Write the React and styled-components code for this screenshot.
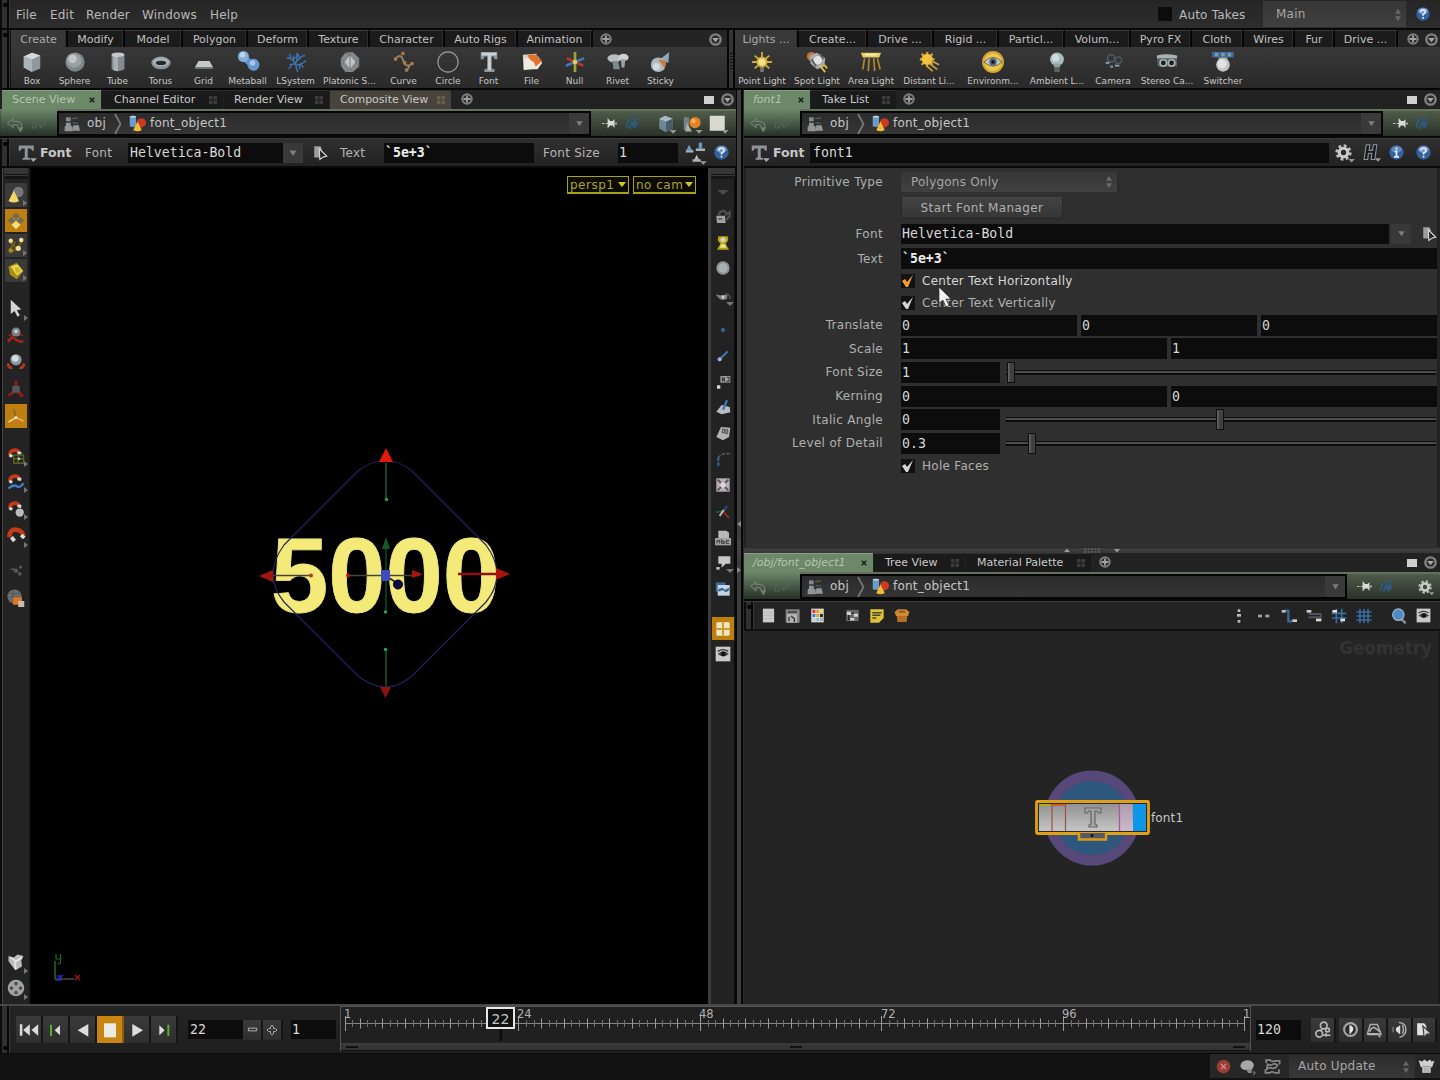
import React from "react";
import styled, { createGlobalStyle, css } from "styled-components";

const Global = createGlobalStyle`
  * { box-sizing: border-box; }
  html, body { margin: 0; padding: 0; background: #111; overflow: hidden; }
  body { font-family: "DejaVu Sans", sans-serif; font-size: 12px; color: #c4c4c4; }
`;
const mono = `"DejaVu Sans Mono", "Liberation Mono", monospace`;

/* ---------- icons ---------- */
const W = "#dcdcdc", Y = "#e2c33a";
const magnet = (
  <g>
    <path d="M4 12a6.500 6.500 0 0 1 12-3.500" fill="none" stroke="#c23a17" strokeWidth="5" />
    <path d="M3 12l4 2M14 9l5 1" stroke={W} strokeWidth="4" />
  </g>
);
const shapes = {
  box: <g><path d="M3 6l9-4 9 3v14l-9 4-9-5z" fill="#8f989c" /><path d="M3 6l9-4 9 3-9 4z" fill="#d3dadc" /><path d="M3 6l9 3v14l-9-5z" fill="#abb4b8" /></g>,
  sphere: <g><circle cx="12" cy="12" r="10.500" fill="#7d8588" /><circle cx="11" cy="10.500" r="8" fill="#99a1a4" /><circle cx="9.500" cy="8.500" r="4.500" fill="#c2c9cb" /></g>,
  tube: <g><path d="M5 4v16q7 4 14 0V4z" fill="#828b90" /><path d="M7 5v16q3 1 5 1V5z" fill="#a9b1b5" /><ellipse cx="12" cy="4" rx="7" ry="2.500" fill="#c3cacd" /></g>,
  torus: <g><ellipse cx="12" cy="13" rx="10.500" ry="7" fill="#8b9397" /><ellipse cx="12" cy="12" rx="9" ry="5" fill="#a9b0b3" /><ellipse cx="12" cy="13" rx="5.500" ry="2.300" fill="#24272a" /></g>,
  grid: <g><path d="M6 11h12l4 7H2z" fill="#c3c8c9" /><path d="M2 18h20v1.500H2z" fill="#777" /></g>,
  metaball: <g><path d="M7 7l10 8" stroke="#5b8fc6" strokeWidth="7" /><circle cx="7" cy="6" r="6" fill="#83acd8" /><circle cx="18" cy="15" r="6.500" fill="#6797cd" /><circle cx="6" cy="4" r="3" fill="#bdd3ea" /><circle cx="17" cy="13" r="3" fill="#a8c6e6" /></g>,
  lsystem: <g fill="none" stroke="#3b74b2" strokeWidth="1.600"><path d="M14 23q-3-7-2-12M12 14L6 8M12 14L5 15M12 12l6-6M12 16l8-3M6 8L2 8M6 8L5 3M9 11l0-6M16 8l-2-5M18 6l4-1M17 14l3 4M8 14.500l-4 5M20 13l3-3M13 11l0-9M16 14l0 6M9 9l4-3" /></g>,
  platonic: <g><path d="M7 2l8-1 7 7v9l-7 6H7l-5-7V8z" fill="#86898b" /><path d="M12 5l6 7-6 7-6-7z" fill="#c2c4c5" /><path d="M2 8l4 4-4 4M7 2l5 3 3-4M22 8l-4 4 4 5M7 23l5-4 3 4M12 5v14" stroke="#6c6f71" fill="none" /></g>,
  curve: <g><path d="M3 8q6-6 8 2 2 9 10 4M19 14l-4 8" fill="none" stroke="#8e8470" strokeWidth="2" /><g fill="#b8783e"><rect x="1" y="7" width="3.500" height="3.500" /><rect x="9" y="1" width="3.500" height="3.500" /><rect x="11" y="11" width="3.500" height="3.500" /><rect x="19" y="12" width="3.500" height="3.500" /><rect x="13" y="19" width="3.500" height="3.500" /></g></g>,
  circle: <circle cx="12" cy="12" r="11" fill="none" stroke="#9a9ea1" strokeWidth="1.200" />,
  bigT: <g><path d="M3 1h18v8h-3l-1-3h-2v13l3 1v3H7v-3l3-1V6H7L6 9H3z" fill="#8f979b" /><path d="M4 2h16v3H4zM11 5h3v16h-3z" fill="#ccd2d4" /></g>,
  file: <g><path d="M2 4l15-1v16L3 21z" fill="#d8cfc0" /><path d="M3 8h5l2-2h9l4 7-5 7H3z" fill="#f0ece2" /><path d="M7 5q9-3 11 1l5 5-7 6-2-5q-4-1-7-7z" fill="#e0702a" /></g>,
  nullI: <g strokeWidth="3"><path d="M2 16l20-8" stroke="#3d78b4" /><path d="M3 8l18 8" stroke="#b13a2c" /><path d="M12 1v22" stroke="#9aa23a" /><circle cx="12" cy="12" r="2.500" fill="#ddd069" stroke="none" /></g>,
  rivet: <g><ellipse cx="8" cy="8" rx="7.500" ry="4.500" fill="#b7bec1" /><path d="M6 11h6l2 9H7z" fill="#7f8a8f" /><ellipse cx="18" cy="7" rx="5.500" ry="4" fill="#cdd3d5" /><path d="M15 9h5l-1 9h-3z" fill="#98a3a8" /></g>,
  sticky: <g><path d="M21 1l-1 12-9-4z" fill="#8fa7bb" /><circle cx="9" cy="15" r="8" fill="#aeb9c0" /><path d="M9 9l9 2-2 8z" fill="#d5793a" /><circle cx="7" cy="17" r="4" fill="#d1d7da" /></g>,
  pointLight: <g stroke="#d1a936" strokeWidth="2"><path d="M12 1v20M1 12h22M4 5l16 14M20 5L4 19" /><circle cx="12" cy="12" r="5" fill="#f3e28c" /><rect x="10" y="18" width="4" height="5" fill="#777" stroke="none" /></g>,
  spotLight: <g><ellipse cx="6" cy="6" rx="5" ry="5" fill="#c4743a" /><path d="M4 5l8-3 9 6-1 9-8 3-7-6z" fill="#a9abac" /><circle cx="13" cy="10" r="4.500" fill="#e4e4e2" /><path d="M6 9l5 8M15 3l4 6" stroke="#5d6265" strokeWidth="2" /><path d="M15 16l6 7M20 15l3 4" stroke={Y} strokeWidth="2" /></g>,
  areaLight: <g><path d="M1 2h22l-2 5H3z" fill="#e7cc5f" /><path d="M5 3h14l-1 2H6z" fill="#fbf0b8" /><path d="M5 8l-2 12M10 8l-1 14M15 8l1 14M19 8l3 12" stroke="#b58a2e" strokeWidth="1.800" /></g>,
  distant: <g><path d="M10 1v16M2 9h16M4 3l12 12M16 3L4 15" stroke="#d9a02c" strokeWidth="2.500" /><circle cx="10" cy="9" r="6" fill="#efc246" /><path d="M15 11l8 4M13 14l8 6M9 16l7 6" stroke="#d0a73a" strokeWidth="1.800" /></g>,
  environ: <g><circle cx="12" cy="12" r="12" fill="#d3a82d" /><circle cx="12" cy="12" r="9.500" fill="#e9c853" /><path d="M2 12q10-10 20 0-10 9-20 0z" fill="#c2c6c4" stroke="#6f6233" /><circle cx="12" cy="12" r="4" fill="#4d6680" /><circle cx="12" cy="12" r="1.800" fill="#111" /></g>,
  ambient: <g><circle cx="12" cy="9" r="7.500" fill="#a9bcc0" /><circle cx="10.500" cy="7.500" r="4" fill="#cfdcde" /><path d="M8 14h8l-1 4H9z" fill="#8fa3a7" /><rect x="9" y="18" width="6" height="5" fill="#5f6466" /></g>,
  camera: <g><path d="M1 12l6-5h10l5 5-5 6H6z" fill="#30373a" /><circle cx="10" cy="8" r="4" fill="none" stroke="#566066" strokeWidth="1.500" /><circle cx="18" cy="10" r="3.500" fill="none" stroke="#4d585e" strokeWidth="1.500" /><path d="M9 17h3M14 16h5M4 13h4" stroke="#98a5aa" strokeWidth="2" /></g>,
  stereo: <g><path d="M1 6q10-4 22 0v11H2z" fill="#596367" /><path d="M1 5q10-3 22 0v3H1z" fill="#aab2b5" /><circle cx="8" cy="13" r="3.500" fill="#1c1f20" stroke="#aab2b5" strokeWidth="1.800" /><circle cx="17" cy="13" r="3.500" fill="#1c1f20" stroke="#aab2b5" strokeWidth="1.800" /></g>,
  switcher: <g><path d="M0 1h24v6H0z" fill="#3f668f" /><path d="M3 2h4v4H3zM10 2h4v4h-4zM17 2h4v4h-4z" fill="#7799ba" /><path d="M7 7h10v5H7z" fill="#999" /><circle cx="12" cy="15" r="7.500" fill="#c3c5c5" /><circle cx="11" cy="14" r="5" fill="#e2e2e0" /></g>,
  plus: <g><circle cx="12" cy="12" r="9.500" fill="#2c2c2c" stroke="#7d7d7d" strokeWidth="4" /><path d="M12 5v14M5 12h14" stroke="#a0a0a0" strokeWidth="3.600" /></g>,
  down: <g><circle cx="12" cy="12" r="9.500" fill="#2a2a2a" stroke="#808080" strokeWidth="4.500" /><path d="M6 9h12l-6 8z" fill="#a8a8a8" /></g>,
  back: <g fill="none" stroke="#75806f" strokeWidth="1.700"><path d="M1 11l8-7v4h5q8 1 8 7v3h-5q0-5-4-5H9v4z" /><path d="M17 18l3 5 3-5z" fill="#75806f" /></g>,
  fwd: <g fill="none" stroke="#566154" strokeWidth="1.700"><path d="M22 11l-8-7v4H9q-8 1-7 7v3h5q0-5 4-5h3v4z" /></g>,
  obj: <g><path d="M3 2h7v6H3z" fill="#85898b" /><path d="M3 10h7v4l3 2v7H1v-7l2-2zM14 14h8l2 8H13z" fill="#929597" /><path d="M12 4l9-1M13 10l8 1" stroke="#565859" strokeWidth="2" /></g>,
  geo: <g><path d="M1 2q5-2 9 0v14q-4 2-9 0z" fill="#6b9cc9" /><ellipse cx="5.500" cy="2.500" rx="4.500" ry="1.500" fill="#b4cfe6" /><circle cx="17.500" cy="11" r="6.500" fill="#cb3a20" /><path d="M12 9l6 12q-6 4-12 0z" fill="#f2bd36" /></g>,
  pin: <g><path d="M0 12h4M6 12h5" stroke="#bbb" strokeWidth="1.800" /><path d="M9 3l4 5h4l3-3v14l-3-4h-4l-4 5z" fill="#d8dad5" /><path d="M20 12h4" stroke="#aaa" strokeWidth="3" /></g>,
  link: <g fill="none" stroke="#2f587f" strokeWidth="2.800"><path d="M3 19Q1 4 21 3M8 21q-1-12 11-12M14 20l7-9" /><circle cx="14.500" cy="13" r="3" fill="#2f587f" /></g>,
  cube: <g><path d="M3 5l8-4 10 4v13l-9 5-9-5z" fill="#6f8795" /><path d="M3 5l8-4 10 4-9 4z" fill="#a9bac4" /><path d="M12 9l9-4v13l-9 5z" fill="#485c69" /><path d="M17 20h9l-4.500 5z" fill="#999" /></g>,
  geoOrange: <g><path d="M1 3h7v17H1z" fill="#6f8089" /><path d="M5 10l7 12H3z" fill="#a9b1ae" /><circle cx="16" cy="10" r="7.500" fill="#e38123" /><circle cx="14" cy="8" r="3" fill="#f5b060" /><path d="M17 20h9l-4.500 5z" fill="#999" /></g>,
  white: <g><rect x="1" y="1" width="20" height="20" fill="#d8dacf" /><path d="M17 20h9l-4.500 5z" fill="#999" /></g>,
  tHead: <g><path d="M1 2h20v7h-2l-2-3h-4v12l3 1v2H6v-2l3-1V6H5L3 9H1z" fill="#8f9496" /><path d="M16 19h9l-4.500 5z" fill="#aaa" /></g>,
  dropS: <path d="M5 7h14l-7 11z" fill="#7d7d7d" />,
  picker: <g><path d="M2 2h10l2 4v14H2z" fill="#9d9d9d" /><path d="M10 6l12 12-5 1-6 4z" fill="#222" stroke="#d5d5d5" strokeWidth="1.800" /></g>,
  handles: <g><path d="M1 10h9M13 8h11M9 21h10" stroke="#a8b1b5" strokeWidth="3" /><path d="M5 3l3 6H2zM17 0h3v7h-3z" fill="#6d9ac4" stroke="#6d9ac4" /><path d="M14 14l3 6h-6z" fill="#bbb" /><path d="M18 22h8l-4 4z" fill="#999" /></g>,
  help: <g><circle cx="12" cy="12" r="11.500" fill="#34609d" /><ellipse cx="12" cy="7" rx="8.500" ry="5.500" fill="#7599c6" /><path d="M8 9q0-4 4-4t4 4q0 2-4 4v2M12 17v3" fill="none" stroke="#e4ebf3" strokeWidth="2.800" /></g>,
  info: <g><circle cx="12" cy="12" r="11.500" fill="#34609d" /><ellipse cx="12" cy="7" rx="8.500" ry="5.500" fill="#5f88bb" /><path d="M12 4v3M9 10h3v8M8 19h8" fill="none" stroke="#e4ebf3" strokeWidth="2.800" /></g>,
  gear: <g><circle cx="12" cy="12" r="9.500" fill="none" stroke="#b9bcb8" strokeWidth="4" strokeDasharray="4 3.460" /><circle cx="12" cy="12" r="6" fill="none" stroke="#c9ccc8" strokeWidth="4.500" /><path d="M19 21h9l-4.500 5z" fill="#999" /></g>,
  hou: <g><path d="M6 1h5l-1 8h5l1-8h5l-3 21h-5l1-9H9l-1 9H3z" fill="#17171b" stroke="#8f979c" strokeWidth="1.500" /><path d="M18 20h9l-4.500 5z" fill="#999" /></g>,
  selObj: <g><circle cx="15" cy="8" r="7" fill="#74787b" /><path d="M9 6l7 14q-7 4-14 0z" fill="#f0d768" /></g>,
  selDiamond: <g><path d="M12 1l11 10-11 10L1 11z" fill="#6f6a5c" /><path d="M6 6l11 10M18 6L7 16" stroke="#b5832c" strokeWidth="1.500" /><path d="M12 12l6 5-6 6-6-6z" fill="#f0e180" /></g>,
  selPts: <g><path d="M3 6l11 10L4 20M20 5l-6 11M3 18l8-12" stroke="#6f5a12" strokeWidth="3" fill="none" /><g fill="#eddf96"><circle cx="5" cy="5" r="3" /><circle cx="19" cy="4" r="3" /><circle cx="15" cy="15" r="3.500" /></g><circle cx="5" cy="18" r="3" fill="#a98d1c" /></g>,
  selPrim: <g><path d="M2 6l11-5 9 11-9 11-9-6z" fill="#a89016" /><path d="M5 6l9-3 7 9-8 6z" fill="#e8d556" /><path d="M10 8l5-1 3 5-5 3z" fill="#cbb32b" /></g>,
  arrow: <path d="M5 1l14 13-6 .500 4 7-3 2-4-7.500L5 20z" fill="#d4d4d4" />,
  move: <g><path d="M1 21l6-6 8 5 7 1" fill="none" stroke="#a02716" strokeWidth="3.500" /><path d="M2 12h19" stroke="#822" strokeWidth="2.500" /><circle cx="12" cy="8" r="6" fill="#7b8286" /><circle cx="12" cy="7" r="2.500" fill="#caced0" /></g>,
  rotate: <g><path d="M1 14q2 7 6 5M23 14q-2 7-6 5" fill="none" stroke="#ab3b18" strokeWidth="4" /><circle cx="12" cy="9" r="7.500" fill="#8f999e" /><circle cx="11" cy="7" r="4.500" fill="#d4dadd" /></g>,
  scale: <g><path d="M12 1v8M10 15L2 21M14 15l7 7" stroke="#8d1c14" strokeWidth="4.500" /><path d="M7 8h10v9H7z" fill="#54575b" /></g>,
  axes: <g fill="none" strokeWidth="2"><path d="M9 3l3 11" stroke="#806a2e" /><path d="M12 14l-10 6" stroke="#e0d59a" /><path d="M12 14l10 5" stroke="#d9b86a" /><path d="M9 19h8" stroke="#e8603a" /><circle cx="12" cy="14" r="2" fill="#eee3b0" stroke="none" /></g>,
  magGrid: <g>{magnet}<path d="M9 12h13v11H9zM9 17h13M15 12v11" fill="none" stroke="#56621f" strokeWidth="2" /><circle cx="16" cy="17" r="1.800" fill="#ccc" /></g>,
  magCurve: <g>{magnet}<path d="M2 22q7-6 11-3t9-4" fill="none" stroke="#3f7fc4" strokeWidth="3" /></g>,
  magPt: <g>{magnet}<circle cx="17" cy="18" r="5.500" fill="#b9bcbc" /></g>,
  mag: <g><path d="M3 15Q4 3 13 5q7 1 9 8" fill="none" stroke="#c23a17" strokeWidth="6" /><path d="M6 15l4 5M19 12l4 4" stroke={W} strokeWidth="5" /></g>,
  dim: <g fill="#55585a"><path d="M3 11l7-2v4z" /><circle cx="12" cy="13" r="3" /><circle cx="18" cy="8" r="2" /><circle cx="17" cy="17" r="2.500" /></g>,
  world: <g><circle cx="10" cy="10" r="9.500" fill="#6b6e6f" /><path d="M3 6h14M2 11h15M8 2v16" stroke="#55585a" strokeWidth="1.600" /><rect x="8" y="11" width="12" height="10" fill="#d87a22" /><rect x="15" y="16" width="8" height="8" fill="#c9bcb0" /></g>,
  cloth: <g><path d="M2 4l7 2 5-4 8 2-3 6 1 8-9 5-6-8-3-4z" fill="#b9bdbd" /><path d="M5 6l7 5 8-5M10 12l2 10" stroke="#e9ebeb" strokeWidth="2" fill="none" /></g>,
  reel: <g><circle cx="12" cy="12" r="11" fill="#a0a3a3" /><g fill="#505252"><circle cx="12" cy="6" r="2.500" /><circle cx="12" cy="18" r="2.500" /><circle cx="6" cy="12" r="2.500" /><circle cx="18" cy="12" r="2.500" /></g></g>,
  tri: <path d="M3 9h18l-9 7z" fill="#4a4a4a" />,
  lock: <g><path d="M2 10h13l1 11H3z" fill="#a2a2a2" /><path d="M6 10q0-6 5-7t6 5l5-3v6l-5 5" fill="none" stroke="#4e4e4e" strokeWidth="3.500" /><path d="M5 15h6" stroke="#444" strokeWidth="2" /></g>,
  lampY: <g><path d="M5 2h14l1 6-4 5 5 9H3l5-9-4-5z" fill="#b4a317" /><circle cx="12" cy="7" r="4" fill="#d8d2ae" /><path d="M9 14h6l2 5H7z" fill="#ece287" /></g>,
  ball: <g><circle cx="12" cy="12" r="10" fill="#8d9496" /><circle cx="12" cy="12" r="7" fill="#a9b0b2" /></g>,
  ghost: <g><path d="M1 8q9 3 18-1l-1 8q-8 4-13-2z" fill="#7e7e7e" /><circle cx="12" cy="12" r="2.500" fill="#ccc" /><path d="M15 8q6-2 8 7" fill="none" stroke="#555" strokeWidth="2" /></g>,
  dot: <circle cx="12" cy="12" r="3.200" fill="#2b649f" />,
  norm: <g><path d="M6 18L19 5" stroke="#3d7bb5" strokeWidth="3" /><circle cx="7" cy="17" r="3.200" fill="#9ab5c9" /></g>,
  ptNum: <g><path d="M8 3h15v10H8z" fill="#9b9b9b" /><path d="M11 11V5l3 6V5M18 5h3v6h-4" stroke="#333" strokeWidth="1.500" fill="none" /><rect x="3" y="17" width="5" height="5" fill="#ddd" /></g>,
  primN: <g><path d="M2 19l8-10 12 3 1 8-13 3z" fill="#b9bcbd" /><path d="M12 16l6-14" stroke="#3a78b8" strokeWidth="3.500" /></g>,
  primNum: <g><path d="M2 18l7-15 14 1-2 14-9 5z" fill="#b3b3b3" /><path d="M11 6h3v6h-3zM16 7h3v6h-3z" fill="none" stroke="#4c4c4c" strokeWidth="1.500" /></g>,
  hull: <g fill="none" strokeWidth="2"><path d="M5 10Q9 3 22 4" stroke="#5e6468" strokeDasharray="5 2" /><path d="M5 9v14" stroke="#2c5d8d" strokeWidth="3.500" strokeDasharray="6 1.500" /></g>,
  tex: <g><rect x="2" y="2" width="20" height="20" fill="#b6afb3" /><path d="M4 4l5 5M20 4l-5 5M4 20l5-5M20 20l-5-5" stroke="#674c5d" strokeWidth="3" /><circle cx="12" cy="12" r="4" fill="#d7d7d5" /></g>,
  rgb: <g strokeWidth="3"><path d="M12 12l6-9" stroke="#234f80" /><path d="M14 11L2 12" stroke="#1f5c28" /><path d="M13 12l8 9" stroke="#8f2720" /><path d="M7 18l6-9" stroke="#bbb" /></g>,
  abc: <g><path d="M5 1h12l4 3v9H5z" fill="#b8b8b8" /><path d="M0 12h24v11H0z" fill="#9e9e9e" /><path d="M3 20v-4h4v4M10 14v6h4v-3h-3M21 16h-4v4h4" stroke="#333" fill="none" strokeWidth="1.500" /></g>,
  speech: <g><path d="M5 2h18v11h-7l-6 6v-6H5z" fill="#c8c8c8" /><rect x="2" y="18" width="5" height="4" fill="#bbb" /></g>,
  image: <g><path d="M1 2h15v14H1z" fill="#3b6796" /><path d="M4 6h18v16H4z" fill="#c4d4e3" /><path d="M5 12l6-2 4 3 6-3v4l-4 3-6-3-6 2z" fill="#3e6690" /></g>,
  fourG: <g><rect x="2" y="2" width="20" height="20" rx="2" fill="#efe6c2" /><path d="M12 2v20M2 12h20" stroke="#cf9a35" strokeWidth="3" /></g>,
  eyeBox: <g><rect x="1" y="1" width="22" height="22" fill="#c9c9c9" /><path d="M4 12q8-8 17 0-9 7-17 0z" fill="#4a4a4a" /><path d="M4 8q8-5 16 0" fill="none" stroke="#333" strokeWidth="2" /><circle cx="12.500" cy="12" r="3.600" fill="#111" /></g>,
  list: <g><rect x="3" y="1" width="18" height="22" fill="#cacaca" /><path d="M3 7h18M3 12h18M3 17h18" stroke="#b0b0b0" /></g>,
  listPage: <g><rect x="1" y="2" width="21" height="20" fill="#858585" /><path d="M4 6h14" stroke="#333" strokeWidth="2" /><rect x="3" y="9" width="15" height="13" fill="#b2b2b2" /><path d="M6 20v-7M9 12l5 4v5" stroke="#333" strokeWidth="2" fill="none" /></g>,
  swatch: <g><rect x="2" y="1" width="20" height="22" fill="#dadada" />{["#d03a2a", "#e3a02a", "#e8df3a", "#3d7fc0", "#e3a02a", "#222", "#ccc", "#7cc", "#aaa"].map((c, i) => <rect key={i} x={4 + (i % 3) * 6} y={3 + Math.floor(i / 3) * 6.500} width="4.500" height="5" fill={c} />)}</g>,
  netNode: <g><path d="M2 3h20v18H2z" fill="#666" /><path d="M3 6h7v5H3zM14 9h7v5h-7zM8 16h7v4H8z" fill="#d0d0d0" /><path d="M10 8h4M6 11v7h2" stroke="#1a1a1a" strokeWidth="2" fill="none" /></g>,
  note: <g><path d="M2 2h20v13l-7 7H2z" fill="#dcc338" /><path d="M5 7h14M5 11h12M5 15h6" stroke="#4c4618" strokeWidth="2.200" /></g>,
  crate: <g><path d="M4 9h16l-1 12H5z" fill="#b56f22" /><path d="M1 6l5-4h12l5 4-2 6H3z" fill="#cf8c32" /><path d="M7 4h10v3H7z" fill="#8f5a1c" /></g>,
  alV: <g fill="#bbb"><rect x="10" y="2" width="4" height="4" /><rect x="9" y="9" width="6" height="4" /><rect x="10" y="18" width="4" height="4" /></g>,
  alH: <g fill="#a2a2a2"><rect x="3" y="10" width="6" height="4" /><rect x="14" y="10" width="6" height="4" /></g>,
  wireV: <g><path d="M5 4h6v16h6" fill="none" stroke="#35699b" strokeWidth="3.500" /><rect x="1" y="3" width="6" height="4" fill="#bbb" /><rect x="17" y="17" width="7" height="4" fill="#ccc" /></g>,
  wireH: <g><path d="M4 9h18v5H4" fill="none" stroke="#4b565f" strokeWidth="3" /><rect x="1" y="3" width="7" height="4" fill="#ccc" /><rect x="15" y="16" width="8" height="4" fill="#ddd" /></g>,
  gridN: <g><path d="M1 8h22M1 15h22M8 1v22M16 1v22" stroke="#3a6fa2" strokeWidth="2.500" /><rect x="2" y="3" width="7" height="4" fill="#ddd" /><rect x="14" y="16" width="7" height="4" fill="#ddd" /></g>,
  gridB: <path d="M1 6h22M1 12h22M1 18h22M6 1v22M12 1v22M18 1v22" stroke="#3a6fa2" strokeWidth="2.300" />,
  mag2: <g><path d="M15 16l7 7" stroke="#888" strokeWidth="4" /><circle cx="11" cy="10" r="8.500" fill="#4f8bc2" stroke="#93b2cf" strokeWidth="2" /></g>,
  first: <path d="M1 5h3v14H1zM13 5v14L5 12zM23 5v14l-8-7z" fill={W} />,
  prevK: <g><path d="M3 4h3v17H3z" fill="#55b02c" /><path d="M18 5v15l-8-7.500z" fill={W} /></g>,
  rev: <path d="M20 3v19L4 12.500z" fill={W} />,
  stop: <path d="M3 2h18v21H3z" fill="#ecebe6" />,
  play: <path d="M5 3v19l16-9.500z" fill={W} />,
  nextK: <g><path d="M17 4h3v17h-3z" fill="#55b02c" /><path d="M5 5v15l8-7.500z" fill={W} /></g>,
  minus: <path d="M3 9h18v6H3z" fill="none" stroke="#bbb" strokeWidth="2" />,
  plusO: <path d="M12 2l3 4v3h4l3 3-3 3h-4v4l-3 3-3-3v-4H5l-3-3 3-3h4V6z" fill="none" stroke="#aaa" strokeWidth="2" />,
  keyI: <g fill="none" stroke="#b8b8b8" strokeWidth="2.200"><circle cx="13" cy="6" r="4.500" /><path d="M11 10l-2 3" /><circle cx="7" cy="17" r="4.500" /><circle cx="18" cy="12" r="2.500" /><path d="M11 19h11M16 16v5" /></g>,
  clock: <g><circle cx="12" cy="12" r="9" fill="#2c2c2c" stroke="#a5a5a5" strokeWidth="3" /><path d="M11.500 6v12M13 8q4 3 0 7z" stroke="#e6e6e6" strokeWidth="2" fill="#ddd" /></g>,
  chart: <g><path d="M2 18l4-13h10l5 13z" fill="none" stroke="#aaa" strokeWidth="2" /><path d="M5 15q4-8 8-5t7 5M2 19h15" stroke="#bbb" strokeWidth="2" fill="none" /><path d="M15 18h8l-4 6z" fill="#999" /></g>,
  audio: <g fill="none" strokeWidth="2"><path d="M3 8v8" stroke="#777" /><path d="M7 10l6-4v13l-6-5z" fill="#ddd" stroke="none" /><path d="M11 2q10 1 10 10t-9 11M16 6q3 6 0 12" stroke="#b0b0b0" /></g>,
  book: <g><path d="M3 3h10l3 4v13H3z" fill="#e2e2e2" /><path d="M11 7l12 11-6 .500-4 5z" fill="#ccc" stroke="#333" strokeWidth="1.500" /></g>,
  err: <g><circle cx="12" cy="12" r="11" fill="#983d33" /><path d="M8 8l8 8M16 8l-8 8" stroke="#cf9088" strokeWidth="2" /></g>,
  brain: <g><path d="M2 12q0-8 9-9 10 0 10 8l-3 6q-13 2-16-5z" fill="#a8a8a8" /><path d="M10 16h8v5h-5z" fill="#8a8a8a" /><path d="M20 17l4 4-4 4z" fill="#666" /></g>,
  cook: <g fill="none" stroke="#858585" strokeWidth="2.500"><path d="M3 7V3h6q2 3 6 1h7v5M21 16v5h-6q-4-3-7 0H2v-5M5 9q4 2 7 0t7 1l-3 4q-4 1-6 0t-6 2z" /></g>,
  hat: <g><path d="M1 3l5 2 3-3 4 3 4-3 2 3 4-1-3 9H4z" fill="#d0d0d0" /><path d="M6 12h12v9H6z" fill="#c3c3c3" /><path d="M6 12h12M10 14v6M14 14v6" stroke="#888" /></g>,
};
const Svg = styled.svg`display: block; flex: none; overflow: visible;`;
const Icon = ({ n, s = 18 }) => <Svg width={s} height={s} viewBox="0 0 24 24">{shapes[n]}</Svg>;

/* ---------- frame ---------- */
const Screen = styled.div`width: 1440px; height: 1080px; display: flex; flex-direction: column; background: #111; overflow: hidden; white-space: nowrap; line-height: 1;`;
const MenuBar = styled.header`height: 30px; flex: none; display: flex; align-items: center; padding: 0 10px 0 0; background: linear-gradient(#252525, #2d2d2d); border-bottom: 2px solid #070707;`;
const Handle = styled.div`width: 10px; align-self: stretch; flex: none; margin-right: ${p => p.$gap ?? 1}px; background: linear-gradient(90deg, #0b0b0b 0 2px, #303030 2px 7px, #070707 7px 9px, #353535 9px); display: flex; justify-content: center; align-items: ${p => p.$low ? "flex-end" : "flex-start"}; padding: 3px 0;
  &::before { content: ""; width: 5px; height: 4px; background: #050505; border-radius: 2px; }`;
const Menu = styled.span`width: ${p => p.$w}px; letter-spacing: .2px; padding-top: 2px; color: #b8b8b8;`;
const Spacer = styled.div`flex: 1;`;
const TakeCheck = styled.i`width: 14px; height: 14px; background: #0c0c0c; margin-right: 7px;`;
const Combo = styled.div`display: flex; align-items: center; justify-content: space-between; width: ${p => p.$w}px; height: ${p => p.$h}px; padding: 0 5px 0 ${p => p.$pl}px; margin-right: ${p => p.$mr || 0}px; background: linear-gradient(${p => p.$dark ? "#2d2d2d, #383838" : "#363636, #404040"}); color: #a6a6a6; letter-spacing: .22px; flex: none; border-right: 2px solid #2a2a2a; svg { margin-top: 1px; }`;
const Updown = () => <Svg width="6" height="14" viewBox="0 0 7 14"><path d="M0 5.500L3.500 0 7 5.500zM0 8.500h7L3.500 14z" fill="#6a6a6a" /></Svg>;

const Shelves = styled.div`display: flex; height: 60px; flex: none; border-bottom: 2px solid #060606;`;
const Shelf = styled.section`display: flex; width: ${p => p.$w}px; flex: none;`;
const ShelfBody = styled.div`flex: 1; min-width: 0; display: flex; flex-direction: column; background: #262626;`;
const ShelfTabs = styled.div`display: flex; height: 17px; align-items: stretch; background: #242424;`;
const ShelfTab = styled.div`width: ${p => p.$w}px; flex: none; display: flex; align-items: center; justify-content: center; font-size: 11px; color: ${p => p.$on ? "#aaa" : "#c0c0c0"}; background: ${p => p.$on ? "#383838" : "#1b1b1b"}; border-top: 1px solid #3a3a3a; border-right: 2px solid #060606; box-shadow: inset -1px 0 #2c2c2c;`;
const TabEnd = styled.div`display: flex; align-items: center; flex: 1; justify-content: space-between; padding: 1px ${p => p.$r}px 0 ${p => p.$l}px;`;
const Tools = styled.div`flex: 1; display: flex; background: linear-gradient(#383838, #292929);`;
const Tool = styled.div`width: ${p => p.$w}px; flex: none; display: flex; flex-direction: column; align-items: center; gap: 4px; padding-top: 4px; font-size: 9px; color: #c6c6c6;`;
const Grip = styled.div`width: 8px; align-self: stretch; flex: none; background: linear-gradient(90deg, #060606 0 2px, #353535 2px 6px, #060606 6px); display: flex; align-items: center; justify-content: center;
  &::before { content: ""; width: 3px; height: 16px; margin-top: 4px; background: repeating-linear-gradient(#111 0 1px, transparent 1px 3px); }`;

const Work = styled.main`display: grid; grid-template-columns: 736px 8px 696px; height: 914px; flex: none;`;
const Pane = styled.section`display: flex; flex-direction: column; min-width: 0; min-height: 0; background: #232323;`;
const VSplit = styled.div`background: linear-gradient(90deg, #080808 0 1px, #3d3d3d 1px 5px, #060606 5px 7px, #2a2a2a 7px); display: flex; flex-direction: column; align-items: center; justify-content: center; padding: 0 3px 1px 0;`;
const HSplit = styled.div`height: 6px; flex: none; background: linear-gradient(#262626, #3f3f3f 2px, #373737); display: flex; align-items: center; justify-content: center;`;
const PaneTabs = styled.div`display: flex; height: 19px; flex: none; background: #222; padding-left: ${p => p.$pl}px; align-items: stretch;`;
const tone = { green: "#6c8868", brown: "#48433b", dark: "#1a1a1a" };
const PaneTab = styled.div`display: flex; align-items: center; justify-content: space-between; width: ${p => p.$w}px; flex: none; padding: 0 6px 1px ${p => p.$pl ?? 12}px; font-size: 11px; margin-right: 1px;
  background: ${p => tone[p.$tone || "dark"]}; color: ${p => p.$tone === "green" ? "#b4c6af" : "#c9c9c9"}; font-style: ${p => p.$it ? "italic" : "normal"}; border-top: 1px solid ${p => p.$tone === "green" ? "#86a181" : "#303030"};`;
const CloseX = ({ on, lit }) => on
  ? <Svg width="6" height="6" viewBox="0 0 8 8"><path d="M1 1l6 6M7 1L1 7" stroke="#1c241b" strokeWidth="2.200" /></Svg>
  : <Svg width="8" height="8" viewBox="0 0 8 8"><path d="M0 0h3.500v3.500H0zM4.500 0H8v3.500H4.500zM0 4.500h3.500V8H0zM4.500 4.500H8V8H4.500z" fill={lit ? "#66604f" : "#3c3c3a"} /></Svg>;
const PaneCtl = styled.div`display: flex; align-items: center; gap: 7px; padding-right: ${p => p.$r}px; margin-left: auto;`;
const AddTab = styled.div`display: flex; align-items: center; margin-left: ${p => p.$l}px; padding-bottom: 1px;`;
const WhiteBox = styled.i`width: 10px; height: 8px; background: #cfcfcf;`;
const PathBar = styled.div`display: flex; align-items: stretch; height: 29px; flex: none; padding-left: ${p => p.$pl}px; border-top: 2px solid #65705d; border-bottom: 2px solid #080808; background: linear-gradient(#4e5c49, #2a3129);`;
const Nav = styled.div`width: ${p => p.$w}px; flex: none; display: flex; align-items: center; gap: 8px; padding: 3px 0 0 6px; margin-top: -2px; background: linear-gradient(#6c8868, #26302a);`;
const PathField = styled.div`width: ${p => p.$w}px; flex: none; display: flex; align-items: center; border: 2px solid #050505; background: linear-gradient(#2b2b2b, #353535); padding-left: 5px; color: #c6c6c6; letter-spacing: .22px;`;
const PathName = styled.span`margin: ${p => p.$m}; padding-bottom: 1px;`;
const Chevron = () => <Svg width="8" height="20" viewBox="0 0 8 20"><path d="M1 0l5.500 10L1 20" fill="none" stroke="#777" strokeWidth="1.800" /></Svg>;
const FieldDrop = styled.div`margin-left: auto; width: 20px; height: 100%; background: #3a3a3a; display: flex; align-items: center; justify-content: center;`;
const PathIcons = styled.div`flex: 1; display: flex; align-items: center; gap: ${p => p.$gap}px; padding-left: ${p => p.$pl}px;`;

const OpBar = styled.div`display: flex; align-items: center; height: 30px; flex: none; background: linear-gradient(#2f2f2f, #222); border-bottom: 2px solid #080808; border-top: 1px solid #3a3a3a;`;
const OpName = styled.b`font-size: 12.500px; color: #c8c8c8; width: ${p => p.$w}px; margin-left: 4px; padding-top: 2px;`;
const OpLabel = styled.div`width: ${p => p.$w}px; letter-spacing: .25px; color: #b5b5b5; flex: none;`;
const Input = styled.div`font-family: ${mono}; font-size: 13.200px; font-weight: ${p => p.$bold ? 700 : 400}; color: ${p => p.$bold ? "#eee" : "#d8d8d8"}; background: #0c0c0c; height: ${p => p.$h || 20}px; display: flex; align-items: center; padding: ${p => p.$dn ? 1 : 0}px 0 0 ${p => p.$pl ?? 1}px; margin-right: ${p => p.$mr || 0}px;
  ${p => p.$w ? css`width: ${p.$w}px; flex: none;` : css`flex: 1;`}`;
const DropBtn = styled.div`width: ${p => p.$w || 20}px; height: 20px; flex: none; background: #393939; display: flex; align-items: center; justify-content: center; margin-right: ${p => p.$mr || 0}px;`;
const Push = styled.div`margin-left: ${p => p.$l}px; flex: none;`;

/* ---------- viewport ---------- */
const ViewRow = styled.div`flex: 1; display: grid; grid-template-columns: 31px 677px 28px; min-height: 0;`;
const LeftTools = styled.div`background: linear-gradient(90deg, #0a0a0a 0 2px, #444 2px 3px, #232323 3px 29px, #0a0a0a 30px); display: grid; grid-template-rows: ${p => p.$rows}; justify-items: center; padding-left: 1px; min-height: 0;`;
const RightTools = styled.div`background: linear-gradient(90deg, #3c3c3c 0 3px, #222 3px 26px, #0a0a0a 26px); display: grid; grid-template-rows: ${p => p.$rows}; justify-items: center; padding-left: 1px; min-height: 0;`;
const ToolCell = styled.div`width: 24px; display: flex; align-items: center; justify-content: center; position: relative; background: ${p => p.$on ? "#bf7e10" : p.$lit ? "#3a3a3a" : "transparent"}; ${p => p.$on || p.$lit ? "border: 1px solid #222;" : ""}
  ${p => p.$head && css`background: linear-gradient(#353535 6px, #111 6px 7px, #3a3a3a 7px 8px, #161616 8px 11px, transparent 11px);`}
  ${p => p.$more && css`&::after { content: ""; position: absolute; right: 0; bottom: 1px; border: 3.500px solid transparent; border-left: 4px solid #777; border-right: 0; }`}
  ${p => p.$drop && css`&::after { content: ""; position: absolute; right: 1px; bottom: ${p.$drop}px; border: 4px solid transparent; border-top: 4px solid #777; border-bottom: 0; }`}`;
const Viewport = styled.div`background: #000; position: relative;`;
const CamMenus = styled.div`position: absolute; top: 8px; right: 12px; display: flex; gap: 4px;`;
const CamBtn = styled.div`width: ${p => p.$w}px; height: 18px; border: 1.500px solid #aaa216; border-bottom-width: 2px; color: #aaa238; display: flex; align-items: center; justify-content: space-between; padding: 0 2px 0; font-size: 12px; letter-spacing: .5px; background: #0b0b00;`;
const SceneSvg = styled.svg`display: block; width: 677px; height: 835px;`;

/* ---------- parameters ---------- */
const Params = styled.div`height: 379px; flex: none; background: #2f2f2f; border-left: 2px solid #222; border-right: 3px solid #222; display: grid; grid-template-rows: 27px 25px 27px 23px 22px 21px 24px 23px 24px 24px 23px 24px 22px; position: relative;`;
const PRow = styled.div`display: grid; grid-template-columns: 137px 1fr; column-gap: 18px; align-items: center;`;
const PLabel = styled.span`text-align: right; letter-spacing: .32px; color: #b0b0b0;`;
const PField = styled.div`display: flex; align-items: center; gap: ${p => p.$gap ?? 0}px;`;
const PushBtn = styled.div`width: 162px; height: 22px; display: flex; align-items: center; justify-content: center; background: linear-gradient(#424242, #353535); border: 1px solid #262626; border-top-color: #444; color: #b0b0b0; letter-spacing: .4px;`;
const Check = styled.div`width: 14px; height: 14px; background: #121212; margin-right: 7px; flex: none; display: flex; align-items: center; justify-content: center;`;
const CheckText = styled.span`letter-spacing: .28px; color: ${p => p.$hot ? "#d8d8d8" : "#b0b0b0"};`;
const Tick = ({ c }) => <Svg width="12" height="12" viewBox="0 0 12 12"><path d="M0 6l3-2 2 3 6-7-5 12H4z" fill={c} /></Svg>;
const Track = styled.div`flex: 1; height: 21px; margin: 0 1px 0 6px; background: linear-gradient(transparent 8px, #0c0c0c 8px 9px, #4c4c4c 9px 11px, #0c0c0c 11px 13px, transparent 13px); display: flex; align-items: center;`;
const Knob = styled.i`width: 8px; height: 21px; border: 1px solid #0e0e0e; background: linear-gradient(90deg, #6a6a6a, #3c3c3c 3px, #444);`;
const Pointer = styled.div`position: absolute; left: 192px; top: 119px;`;

/* ---------- network ---------- */
const NetBar = styled.div`display: flex; align-items: center; height: 30px; flex: none; background: #232323; border-top: 1px solid #3c3c3c; border-bottom: 2px solid #101010; padding-right: 9px;`;
const NetIcons = styled.div`display: flex; align-items: center; gap: ${p => p.$gap}px; margin-left: ${p => p.$l}px;`;
const Net = styled.div`flex: 1; background: #242424; position: relative; min-height: 0; border-right: 2px solid #1b1b1b;`;
const Watermark = styled.b`position: absolute; right: 6px; top: 9px; font-size: 16.800px; color: #333;`;
const NodeSpot = styled.div`position: absolute; left: 291px; top: 139px; display: flex; align-items: center;`;
const NodeName = styled.span`color: #c6c6c6; letter-spacing: .15px; margin-left: 1px;`;

/* ---------- playbar ---------- */
const PlayBar = styled.footer`display: flex; height: 49px; flex: none; background: linear-gradient(#242424, #1f1f1f); border-top: 2px solid #484848; align-items: center;`;
const Transport = styled.div`display: flex; margin-left: ${p => p.$l}px;`;
const PBtn = styled.div`width: ${p => p.$w || 27}px; height: ${p => p.$h || 27}px; display: flex; align-items: center; justify-content: center; flex: none; background: ${p => p.$on ? "#c98512" : "linear-gradient(#3a3a3a, #2e2e2e)"}; border-right: 2px solid ${p => p.$on ? "#8a5c0e" : "#151515"};`;
const TimeLine = styled.div`width: 911px; height: 45px; align-self: flex-start; flex: none; display: flex; flex-direction: column; border: 1px solid #555; border-bottom: 0; background: #202020;`;
const Scroll = styled.div`height: 8px; margin-top: auto; background: linear-gradient(#3c3c3c, #303030); border-bottom: 1px solid #111; display: flex; align-items: center; justify-content: space-between; padding: 0 5px;
  i { width: 12px; height: 2px; background: #111; }`;
const Status = styled.div`flex: 1; display: flex; align-items: flex-start; justify-content: flex-end; background: #111; border-top: 1px solid #0a0a0a;`;
const StatusBox = styled.div`display: flex; align-items: center; gap: 8px; height: 24px; width: 230px; padding-left: 6px; background: #262626; flex: none;`;

const STEP = 7.563;
const frames = Array.from({ length: 120 }, (_, i) => i + 1);
const Ruler = () => (
  <Svg width="909" height="34" viewBox="0 0 909 34" fontFamily="DejaVu Sans" fontSize="11.500" fill="#b0b0b0">
    <path d="M4 16.500H904" stroke="#858585" />
    {frames.map(f => {
      const x = Math.round(3.500 + (f - 1) * STEP) + 0.500;
      const h = f % 24 === 0 || f === 1 || f === 120 ? 7.500 : f % 3 === 0 ? 5 : 3.500;
      return <path key={f} d={`M${x} ${16.500 - h}V${16.500 + h}`} stroke={h > 4 ? "#9a9a9a" : "#707070"} />;
    })}
    {[[1, 3], [24, 176], [48, 358], [72, 540], [96, 721]].map(([t, x]) => <text key={t} x={x} y="11">{t}</text>)}
    <text x="902" y="11">1</text>
    <path d="M160 20V34" stroke="#0a0a0a" strokeWidth="2.500" />
    <rect x="146" y="1" width="27" height="20" fill="#111" stroke="#e6e6e6" strokeWidth="2" />
    <text x="150.500" y="16.500" fontSize="14" fill="#c4c4c4">22</text>
  </Svg>
);

const Scene = () => (
  <SceneSvg viewBox="31 168 677 835">
    <text transform="translate(271 612) scale(.99 1.01)" fontFamily="Liberation Sans" fontWeight="700" fontSize="104" fill="#f4ea7a" stroke="#f4ea7a" strokeWidth=".8">5000</text>
    <path d="M358 471Q386 450 412 471L486 545Q508 575 486 602L412 676Q386 698 358 676L284 602Q262 575 284 545Z" fill="none" stroke="#22225f" strokeWidth="1.200" />
    <path d="M386 463V500" stroke="#3c6a48" strokeWidth="1.200" />
    <path d="M386 650V687" stroke="#14592c" strokeWidth="1.500" />
    <path d="M386 545V612" stroke="#0f4a24" strokeWidth="1.500" />
    <path d="M386 537l4 12h-8z" fill="#14592c" />
    <g fill="#2f9a4c"><circle cx="386.500" cy="499.500" r="1.800" /><circle cx="385.500" cy="612" r="1.800" /><circle cx="385.500" cy="649.500" r="1.800" /></g>
    <path d="M273 575.500H312M347 575.500H420" stroke="#4a4433" strokeWidth="1.400" />
    <path d="M458 574H498" stroke="#8c100e" strokeWidth="2.500" />
    <path d="M386 448l7 14h-14z" fill="#e3190e" />
    <path d="M385.500 698l5.500-11h-11z" fill="#8e120e" />
    <path d="M259 576l14-6v12z" fill="#a3150d" />
    <path d="M510 574l-14-6v12zM423 574l-11-4v8z" fill="#a8140e" />
    <circle cx="311" cy="575.500" r="2" fill="#b33a1c" /><circle cx="348" cy="575.500" r="2" fill="#b31a10" />
    <path d="M386 576l11 7" stroke="#222" strokeWidth="1.500" />
    <rect x="381" y="570" width="9" height="11" fill="#3c4bc0" />
    <circle cx="398" cy="584.500" r="4.500" fill="#0a0a4a" stroke="#000" />
    <path d="M55 979V961" stroke="#1f7a36" strokeWidth="1.300" />
    <path d="M56 954v5h4M60.500 954v9l-3 1" fill="none" stroke="#1f6a30" strokeWidth="1.200" />
    <path d="M55 979H74" stroke="#555" strokeWidth="1.300" />
    <path d="M75 975l5 5M80 975l-5 5" stroke="#a01212" strokeWidth="1.500" />
    <path d="M57 976h5l-5 4h5" fill="none" stroke="#2a2ab8" strokeWidth="1.600" />
  </SceneSvg>
);

const NodeDrawing = () => (
  <Svg width="115" height="96" viewBox="1035 770 115 96">
    <circle cx="1092" cy="818" r="47.500" fill="#57487a" />
    <circle cx="1092" cy="818" r="37" fill="#2d577c" />
    <rect x="1036.500" y="801.500" width="112" height="32" rx="1" fill="#2a2a2a" stroke="#e2a014" strokeWidth="2.800" />
    <defs><linearGradient id="nd" x2="0" y2="1"><stop offset="0" stopColor="#929292" /><stop offset="1" stopColor="#c6c6c6" /></linearGradient></defs>
    <rect x="1039" y="804" width="107" height="27" fill="url(#nd)" />
    <rect x="1039" y="804" width="12" height="2" fill="#b5a81e" /><rect x="1052" y="804" width="14" height="2" fill="#cf6030" />
    <path d="M1052 804v27M1065.500 804v27" stroke="#a0513e" strokeWidth="1.200" />
    <path d="M1119.500 804v27" stroke="#a35aa0" strokeWidth="1.400" /><rect x="1120" y="804" width="12" height="27" fill="#d6a8d6" opacity=".4" />
    <rect x="1133" y="804" width="13" height="27" fill="#0e96ea" />
    <path d="M1085 808h16v5h-2.500l-1-2h-2.500v13l2 1v2h-8v-2l2-1v-13h-2.500l-1 2H1085z" fill="#a5a5a5" stroke="#666" strokeWidth="1.200" />
    <path d="M1079 833v6.500h27V833" fill="#555a66" stroke="#dc9b14" strokeWidth="2.500" />
    <circle cx="1092" cy="835.500" r="1.600" fill="#151515" />
  </Svg>
);

const Path = ({ nav, w, children, pl, gap, ipl }) => (
  <PathBar $pl={pl}>
    <Nav $w={nav}><Icon n="back" s={16} /><Icon n="fwd" s={16} /></Nav>
    <PathField $w={w}>
      <Icon n="obj" s={16} /><PathName $m="0 8px 0 7px">obj</PathName><Chevron />
      <Push $l={7}><Icon n="geo" s={17} /></Push><PathName $m="0 0 0 4px">font_object1</PathName>
      <FieldDrop><Icon n="dropS" s={11} /></FieldDrop>
    </PathField>
    <PathIcons $gap={gap} $pl={ipl}>{children}</PathIcons>
  </PathBar>
);

const leftShelf = [["Create", 57], ["Modify", 57], ["Model", 58], ["Polygon", 65], ["Deform", 61], ["Texture", 61], ["Character", 75], ["Auto Rigs", 73], ["Animation", 75]];
const leftTools = [["Box", "box", 42], ["Sphere", "sphere", 43], ["Tube", "tube", 43], ["Torus", "torus", 43], ["Grid", "grid", 43], ["Metaball", "metaball", 45], ["LSystem", "lsystem", 51], ["Platonic S...", "platonic", 57], ["Curve", "curve", 51], ["Circle", "circle", 38], ["Font", "bigT", 43], ["File", "file", 43], ["Null", "nullI", 43], ["Rivet", "rivet", 43], ["Sticky", "sticky", 43]];
const rightShelf = [["Lights ...", 64], ["Create...", 69], ["Drive ...", 66], ["Rigid ...", 65], ["Particl...", 66], ["Volum...", 66], ["Pyro FX", 61], ["Cloth", 52], ["Wires", 51], ["Fur", 40], ["Drive ...", 63]];
const rightTools = [["Point Light", "pointLight", 54], ["Spot Light", "spotLight", 56], ["Area Light", "areaLight", 52], ["Distant Li...", "distant", 64], ["Environm...", "environ", 64], ["Ambient L...", "ambient", 64], ["Camera", "camera", 48], ["Stereo Ca...", "stereo", 60], ["Switcher", "switcher", 52]];
const leftStrip = [["", 14, "head"], ["selObj", 26, "lit more"], ["selDiamond", 25, "on"], ["selPts", 25, "lit more"], ["selPrim", 25, "lit more"], ["", 11], ["arrow", 28, "more"], ["move", 26], ["rotate", 27], ["scale", 28], ["axes", 26, "on"], ["", 12], ["magGrid", 27, "more"], ["magCurve", 26, "more"], ["magPt", 27, "more"], ["mag", 28, "more"], ["", 7], ["dim", 28], ["world", 28], ["", 336], ["cloth", 27, "more"], ["reel", 26, "more"]];
const rightStrip = [["", 12, "head"], ["tri", 24], ["lock", 26], ["lampY", 25], ["ball", 25], ["ghost", 33, "", 7], ["", 3], ["dot", 27], ["norm", 26], ["ptNum", 25], ["primN", 26], ["primNum", 26], ["hull", 26], ["tex", 26], ["rgb", 27], ["abc", 25], ["speech", 25, "", 2], ["image", 28], ["", 13], ["fourG", 25, "on"], ["eyeBox", 26]];
const strip = (list, s) => list.map(([n, , f = "", drop], i) => <ToolCell key={i} $head={f.includes("head")} $on={f.includes("on")} $lit={f.includes("lit")} $more={f.includes("more")} $drop={drop}>{n && <Icon n={n} s={s} />}</ToolCell>);
const rows = list => list.map(r => r[1] + "px").join(" ");

const Values = ({ label, vals, bold }) => (
  <PRow><PLabel>{label}</PLabel><PField $gap={4}>{vals.map((v, i) => <Input key={i} $h={21} $bold={bold} $dn>{v}</Input>)}</PField></PRow>
);
const Slider = ({ label, v, at }) => (
  <PRow><PLabel>{label}</PLabel><PField><Input $w={99} $h={21} $dn>{v}</Input><Track><Knob style={{ marginLeft: at }} /></Track></PField></PRow>
);
const CheckRow = ({ text, hot }) => (
  <PRow><span /><PField><Check><Tick c={hot ? "#eda02a" : "#d6d6d6"} /></Check><CheckText $hot={hot}>{text}</CheckText></PField></PRow>
);
const CamArrow = () => <Svg width="8" height="5" viewBox="0 0 8 5"><path d="M0 0h8L4 5z" fill="#d2c91e" /></Svg>;

export default function App() {
  return (
    <Screen>
      <Global />
      <MenuBar>
        <Handle $gap={6} />
        <Menu $w={34}>File</Menu><Menu $w={36}>Edit</Menu><Menu $w={56}>Render</Menu><Menu $w={68}>Windows</Menu><Menu $w={40}>Help</Menu>
        <Spacer /><TakeCheck /><Menu $w={84}>Auto Takes</Menu>
        <Combo $w={145} $h={26} $pl={13}>Main<Updown /></Combo>
        <Push $l={8}><Icon n="help" s={14} /></Push>
      </MenuBar>
      <Shelves>
        <Shelf $w={735}>
          <Handle />
          <ShelfBody>
            <ShelfTabs>{leftShelf.map(([t, w], i) => <ShelfTab key={t} $w={w} $on={!i}>{t}</ShelfTab>)}<TabEnd $l={7} $r={5}><Icon n="plus" s={12} /><Icon n="down" s={13} /></TabEnd></ShelfTabs>
            <Tools>{leftTools.map(([t, n, w]) => <Tool key={t} $w={w}><Icon n={n} s={22} />{t}</Tool>)}</Tools>
          </ShelfBody>
          <Grip />
        </Shelf>
        <Shelf $w={705}>
          <ShelfBody>
            <ShelfTabs>{rightShelf.map(([t, w], i) => <ShelfTab key={i} $w={w} $on={!i}>{t}</ShelfTab>)}<TabEnd $l={9} $r={2}><Icon n="plus" s={12} /><Icon n="down" s={13} /></TabEnd></ShelfTabs>
            <Tools>{rightTools.map(([t, n, w]) => <Tool key={t} $w={w}><Icon n={n} s={22} />{t}</Tool>)}</Tools>
          </ShelfBody>
        </Shelf>
      </Shelves>
      <Work>
        <Pane>
          <PaneTabs $pl={2}>
            <PaneTab $w={99} $pl={10} $tone="green">Scene View<CloseX on /></PaneTab>
            <PaneTab $w={121}>Channel Editor<CloseX /></PaneTab>
            <PaneTab $w={105} $pl={10}>Render View<CloseX /></PaneTab>
            <PaneTab $w={121} $pl={10} $tone="brown">Composite View<CloseX lit /></PaneTab>
            <AddTab $l={9}><Icon n="plus" s={12} /></AddTab>
            <PaneCtl $r={2}><WhiteBox /><Icon n="down" s={13} /></PaneCtl>
          </PaneTabs>
          <Path pl={1} nav={56} w={534} ipl={11} gap={8}>
            <Icon n="pin" s={15} /><Icon n="link" s={15} /><Push $l={9}><Icon n="cube" s={18} /></Push><Icon n="geoOrange" s={18} /><Icon n="white" s={18} />
          </Path>
          <OpBar>
            <Handle $gap={8} />
            <Icon n="tHead" s={18} /><OpName $w={45}>Font</OpName><OpLabel $w={43}>Font</OpLabel>
            <Input $w={155} $pl={2}>Helvetica-Bold</Input><DropBtn $mr={10}><Icon n="dropS" s={12} /></DropBtn><Icon n="picker" s={15} />
            <Push $l={12}><OpLabel $w={44}>Text</OpLabel></Push>
            <Input $w={150} $bold>`5e+3`</Input>
            <Push $l={9}><OpLabel $w={75}>Font Size</OpLabel></Push>
            <Input $w={60}>1</Input>
            <Push $l={7}><Icon n="handles" s={20} /></Push><Push $l={9}><Icon n="help" s={15} /></Push>
          </OpBar>
          <ViewRow>
            <LeftTools $rows={rows(leftStrip)}>{strip(leftStrip, 18)}</LeftTools>
            <Viewport>
              <Scene />
              <CamMenus>
                <CamBtn $w={62}>persp1<CamArrow /></CamBtn>
                <CamBtn $w={63}>no cam<CamArrow /></CamBtn>
              </CamMenus>
            </Viewport>
            <RightTools $rows={rows(rightStrip)}>{strip(rightStrip, 16)}</RightTools>
          </ViewRow>
        </Pane>
        <VSplit><Svg width="4" height="56" viewBox="0 0 4 56"><path d="M4 2v6L0 5zM0 48l4 3-4 3z" fill="#888" /><path d="M1 20v16M3 20v16" stroke="#666" strokeWidth=".8" strokeDasharray="1.500 1.500" /></Svg></VSplit>
        <Pane>
          <PaneTabs $pl={0}>
            <PaneTab $w={66} $pl={9} $tone="green" $it>font1<CloseX on /></PaneTab>
            <PaneTab $w={85} $pl={11}>Take List<CloseX /></PaneTab>
            <AddTab $l={6}><Icon n="plus" s={12} /></AddTab>
            <PaneCtl $r={3}><WhiteBox /><Icon n="down" s={13} /></PaneCtl>
          </PaneTabs>
          <Path pl={0} nav={56} w={583} ipl={10} gap={7}><Icon n="pin" s={15} /><Icon n="link" s={15} /></Path>
          <OpBar>
            <Push $l={7}><Icon n="tHead" s={18} /></Push><OpName $w={37}>Font</OpName>
            <Input $w={519} $mr={6} $pl={3}>font1</Input>
            <NetIcons $gap={10} $l={0}><Icon n="gear" s={17} /><Icon n="hou" s={17} /><Icon n="info" s={15} /></NetIcons>
            <NetIcons $gap={0} $l={12}><Icon n="help" s={15} /></NetIcons>
          </OpBar>
          <Params>
            <PRow><PLabel>Primitive Type</PLabel><PField><Combo $w={218} $h={20} $pl={10}>Polygons Only<Updown /></Combo></PField></PRow>
            <PRow><span /><PField><PushBtn>Start Font Manager</PushBtn></PField></PRow>
            <PRow><PLabel>Font</PLabel><PField><Input $mr={2} $h={20}>Helvetica-Bold</Input><DropBtn $mr={11}><Icon n="dropS" s={11} /></DropBtn><Icon n="picker" s={15} /></PField></PRow>
            <Values label="Text" vals={["`5e+3`"]} bold />
            <CheckRow text="Center Text Horizontally" hot />
            <CheckRow text="Center Text Vertically" />
            <Values label="Translate" vals={["0", "0", "0"]} />
            <Values label="Scale" vals={["1", "1"]} />
            <Slider label="Font Size" v="1" at={1} />
            <Values label="Kerning" vals={["0", "0"]} />
            <Slider label="Italic Angle" v="0" at={210} />
            <Slider label="Level of Detail" v="0.3" at={22} />
            <CheckRow text="Hole Faces" />
            <Pointer><Svg width="14" height="20" viewBox="0 0 14 20"><path d="M1 0v16l4-3 3 7 3-1.500-3-6.500h5z" fill="#f2f2f2" stroke="#333" strokeWidth=".7" /></Svg></Pointer>
          </Params>
          <HSplit><Svg width="56" height="5" viewBox="0 0 56 5"><path d="M0 4l3-3.500L6 4zM50 1h6l-3 3.500z" fill="#999" /><path d="M20 1h16M20 4h16" stroke="#777" strokeDasharray="2 1.500" /></Svg></HSplit>
          <PaneTabs $pl={0}>
            <PaneTab $w={129} $pl={9} $tone="green" $it>/obj/font_object1<CloseX on /></PaneTab>
            <PaneTab $w={91} $pl={11}>Tree View<CloseX /></PaneTab>
            <PaneTab $w={125} $pl={11}>Material Palette<CloseX /></PaneTab>
            <AddTab $l={7}><Icon n="plus" s={12} /></AddTab>
            <PaneCtl $r={3}><WhiteBox /><Icon n="down" s={13} /></PaneCtl>
          </PaneTabs>
          <Path pl={0} nav={56} w={547} ipl={10} gap={7}><Icon n="pin" s={15} /><Icon n="link" s={15} /><Push $l={17}><Icon n="gear" s={14} /></Push></Path>
          <NetBar>
            <Handle $gap={7} />
            <NetIcons $gap={9} $l={0}><Icon n="list" s={15} /><Icon n="listPage" s={16} /><Icon n="swatch" s={15} /></NetIcons>
            <NetIcons $gap={9} $l={20}><Icon n="netNode" s={15} /><Icon n="note" s={16} /><Icon n="crate" s={16} /></NetIcons>
            <Spacer />
            <NetIcons $gap={9} $l={0}>{["alV", "alH", "wireV", "wireH", "gridN", "gridB"].map(n => <Icon key={n} n={n} s={16} />)}</NetIcons>
            <NetIcons $gap={9} $l={19}><Icon n="mag2" s={16} /><Icon n="eyeBox" s={15} /></NetIcons>
          </NetBar>
          <Net>
            <Watermark>Geometry</Watermark>
            <NodeSpot><NodeDrawing /><NodeName>font1</NodeName></NodeSpot>
          </Net>
        </Pane>
      </Work>
      <PlayBar>
        <Handle $low $gap={0} />
        <Transport $l={6}>{["first", "prevK", "rev", "stop", "play", "nextK"].map(n => <PBtn key={n} $on={n === "stop"}><Icon n={n} s={n === "first" ? 20 : 16} /></PBtn>)}</Transport>
        <Push $l={10}><Input $w={55} $pl={2} $h={19}>22</Input></Push>
        <PBtn $w={20} $h={20}><Icon n="minus" s={11} /></PBtn><PBtn $w={20} $h={20}><Icon n="plusO" s={12} /></PBtn>
        <Push $l={8}><Input $w={45} $mr={4} $pl={1} $h={19}>1</Input></Push>
        <TimeLine><Ruler /><Scroll><i /><i /><i /></Scroll></TimeLine>
        <Push $l={5}><Input $w={45} $pl={1} $h={20}>120</Input></Push>
        <Push $l={10}><PBtn $w={25} $h={24}><Icon n="keyI" s={18} /></PBtn></Push>
        <Transport $l={3}>{["clock", "chart", "audio", "book"].map(n => <PBtn key={n} $w={24.500} $h={24}><Icon n={n} s={17} /></PBtn>)}</Transport>
      </PlayBar>
      <Status>
        <StatusBox><Icon n="err" s={15} /><Icon n="brain" s={17} /><Icon n="cook" s={17} /><Combo $dark $w={127} $h={23} $pl={9} $mr={-6}>Auto Update<Updown /></Combo><Icon n="hat" s={17} /></StatusBox>
      </Status>
    </Screen>
  );
}
